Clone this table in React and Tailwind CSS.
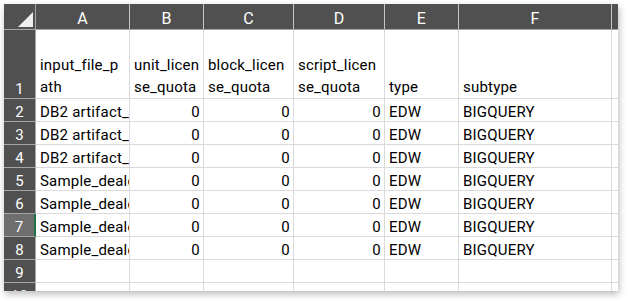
import React from "react";

const cols = [
  { key: "A", w: "w-[94px]", align: "left" },
  { key: "B", w: "w-[74px]", align: "right" },
  { key: "C", w: "w-[90px]", align: "right" },
  { key: "D", w: "w-[91px]", align: "right" },
  { key: "E", w: "w-[74px]", align: "left" },
  { key: "F", w: "w-[153px]", align: "left" },
];

const rows = [
  ["DB2 artifact_s", "0", "0", "0", "EDW", "BIGQUERY"],
  ["DB2 artifact_s", "0", "0", "0", "EDW", "BIGQUERY"],
  ["DB2 artifact_s", "0", "0", "0", "EDW", "BIGQUERY"],
  ["Sample_deale", "0", "0", "0", "EDW", "BIGQUERY"],
  ["Sample_deale", "0", "0", "0", "EDW", "BIGQUERY"],
  ["Sample_deale", "0", "0", "0", "EDW", "BIGQUERY"],
  ["Sample_deale", "0", "0", "0", "EDW", "BIGQUERY"],
  ["", "", "", "", "", ""],
  ["", "", "", "", "", ""],
];

const headerTexts = [
  ["input_file_p", "ath"],
  ["unit_licen", "se_quota"],
  ["block_licen", "se_quota"],
  ["script_licen", "se_quota"],
  ["type"],
  ["subtype"],
];

const font = { fontFamily: "Roboto, 'Noto Sans', sans-serif" };

export default function App() {
  return (
    <div className="w-[628px] h-[301px] bg-white pt-[4px] pl-[4px]" style={font}>
      <div className="w-[614px] h-[287px] overflow-hidden bg-white shadow-[1px_3px_7px_rgba(0,0,0,0.28)] text-[15px] text-black tracking-[0.2px]">
        {/* column header */}
        <div className="flex h-[26px] bg-[#505050] border-b border-[#a6a6a6]">
          <div className="w-[32px] h-full border-r border-[#a6a6a6] relative">
            <svg className="absolute left-[14px] top-[8px]" width="15" height="15" viewBox="0 0 15 15">
              <polygon points="0,15 15,15 15,0" fill="#eeeeee" />
            </svg>
          </div>
          {cols.map((c) => (
            <div
              key={c.key}
              className={`${c.w} h-full border-r border-[#c4c4c4] flex items-start justify-center text-white text-[16px] leading-[16px] pt-[7px]`}
            >
              {c.key}
            </div>
          ))}
          <div className="w-[6px] h-full" />
        </div>

        {/* row 1 */}
        <div className="flex h-[69px]">
          <div className="w-[32px] h-full bg-[#505050] border-r border-b border-[#a6a6a6] flex items-end justify-center text-white leading-[18px]">
            1
          </div>
          {cols.map((c, i) => (
            <div
              key={c.key}
              className={`${c.w} h-full border-r border-b border-[#dadada] flex flex-col justify-end px-[4px] leading-[21.5px] overflow-hidden whitespace-nowrap`}
            >
              {headerTexts[i].map((t, j) => (
                <div key={j}>{t}</div>
              ))}
            </div>
          ))}
          <div className="w-[6px] h-full border-b border-[#dadada]" />
        </div>

        {rows.map((r, ri) => {
          const n = ri + 2;
          const selected = n === 7;
          return (
            <div key={n} className="flex h-[23px]">
              <div
                className={`w-[32px] h-full border-b border-[#a6a6a6] flex items-end justify-center text-white leading-[18px] ${
                  selected ? "bg-[#6e6e6e]" : "bg-[#505050]"
                } ${selected ? "border-r-2 border-r-[#1e7145]" : "border-r border-r-[#a6a6a6]"}`}
              >
                {n}
              </div>
              {cols.map((c, ci) => (
                <div
                  key={c.key}
                  className={`${c.w} h-full border-r border-b border-[#dadada] flex items-end px-[4px] leading-[18px] overflow-hidden whitespace-nowrap ${
                    c.align === "right" ? "justify-end pr-[3px]" : "justify-start"
                  }`}
                >
                  {r[ci]}
                </div>
              ))}
              <div className="w-[6px] h-full border-b border-[#dadada]" />
            </div>
          );
        })}
      </div>
    </div>
  );
}
